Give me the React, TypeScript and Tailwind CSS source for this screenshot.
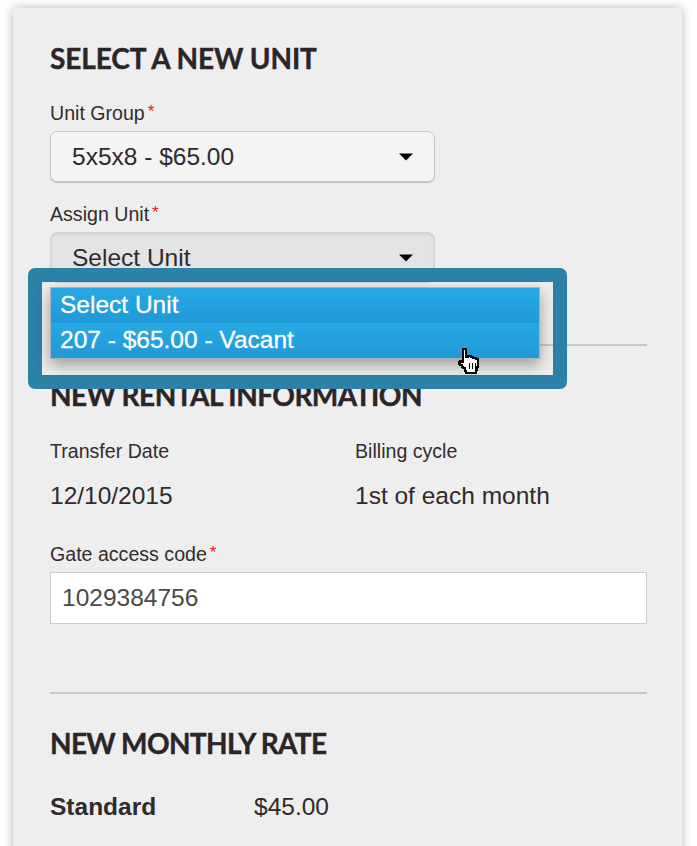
import React from "react";

const Req = () => <span className="ml-[3px] text-[17px] leading-none text-[#f0141e] relative top-[-2px]">*</span>;

const Arrow = () => (
  <svg width="14" height="8" viewBox="0 0 14 8" className="shrink-0">
    <path d="M0 0.5H14L7 7.5Z" fill="#000" />
  </svg>
);

const Heading = ({ children, className = "" }: { children: React.ReactNode; className?: string }) => (
  <h2 className={"font-['Lato',sans-serif] text-[28px] font-bold leading-[30px] text-[#2b2528] [-webkit-text-stroke:0.4px_#2b2528] " + className}>
    {children}
  </h2>
);

const Label = ({ children, req }: { children: React.ReactNode; req?: boolean }) => (
  <div className="flex h-[20px] items-center pt-[2px] text-[19.6px] leading-[20px] text-[#322c2e]">
    {children}
    {req && <Req />}
  </div>
);

const Hand = () => (
  <svg width="24" height="26" viewBox="0 0 24 26" className="absolute left-[458px] top-[348px]" shapeRendering="crispEdges">
    <path
      d="M4 1h3v8h2V8h3v1h2v1h3v1h2v8h-1v3h-1v3H7v-2H6v-3H4v-1H3v-2H1v-1H0v-2h1v-1h2v1h1V1z"
      fill="#fff"
      stroke="#000"
      strokeWidth="1.1"
      transform="translate(1 0)"
    />
    <path d="M11 15h1v6h-1zM14 15h1v6h-1zM17 15h1v6h-1z" fill="#000" />
  </svg>
);

export default function App() {
  return (
    <div className="h-[846px] w-[697px] overflow-hidden bg-white font-['Liberation_Sans',Arial,sans-serif]">
      <div className="relative ml-[13px] mt-[8px] h-[860px] w-[669px] bg-[#eeeeee] pl-[37px] pr-[35px] pt-[35px] shadow-[0_0_10px_rgba(0,0,0,0.28)]">
        <Heading className="tracking-[-0.1px]">SELECT A NEW UNIT</Heading>

        <div className="mt-[29px]">
          <Label req>Unit Group</Label>
          <div className="mt-[9px] flex h-[51px] w-[385px] items-center justify-between rounded-[7px] border border-[#c6c6c6] bg-[#f4f4f4] pl-[21px] pr-[21px] pt-[2px] text-[24.5px] text-[#2f2a2c] shadow-[0_1px_1px_rgba(0,0,0,0.18)]">
            <span>5x5x8 - $65.00</span>
            <span className="-mt-[2px]"><Arrow /></span>
          </div>
        </div>

        <div className="mt-[21px]">
          <Label req>Assign Unit</Label>
          <div className="mt-[9px] flex h-[51px] w-[385px] items-center justify-between rounded-[7px] border border-[#d2d2d2] bg-[#e4e4e4] pl-[21px] pr-[21px] pt-[2px] text-[24.5px] text-[#2f2a2c] shadow-[inset_0_1px_3px_rgba(0,0,0,0.12)]">
            <span>Select Unit</span>
            <span className="-mt-[2px]"><Arrow /></span>
          </div>
        </div>

        <div className="mt-[61px] h-[2px] bg-[#c8c8c8]" />

        <Heading className="mt-[34px] tracking-[-0.53px]">NEW RENTAL INFORMATION</Heading>

        <div className="mt-[30px] grid grid-cols-[305px_1fr]">
          <div>
            <Label>Transfer Date</Label>
            <div className="mt-[21px] text-[24.5px] leading-[30px] text-[#2f2a2c]">12/10/2015</div>
          </div>
          <div>
            <Label>Billing cycle</Label>
            <div className="mt-[21px] text-[24.5px] leading-[30px] text-[#2f2a2c]">1st of each month</div>
          </div>
        </div>

        <div className="mt-[32px]">
          <Label req>Gate access code</Label>
          <div className="mt-[9px] flex h-[52px] items-center border border-[#cccccc] bg-white pl-[11px] text-[24.5px] text-[#4a4a4a]">
            1029384756
          </div>
        </div>

        <div className="mt-[68px] h-[2px] bg-[#c8c8c8]" />

        <Heading className="mt-[34px] tracking-[-0.65px]">NEW MONTHLY RATE</Heading>

        <div className="mt-[34px] flex items-center text-[24.5px] leading-[30px] text-[#2f2a2c]">
          <span className="w-[204px] font-bold">Standard</span>
          <span>$45.00</span>
        </div>
      </div>

      {/* Callout frame and open menu lying over the form */}
      <div className="absolute left-[28px] top-[268px] h-[121px] w-[539px] rounded-[7px] border-[14px] border-[#2b82a6]" />
      <div className="absolute left-[50px] top-[287px] w-[490px] border border-[#a9b4ba] text-[24.5px] font-medium text-white shadow-[0_6px_14px_rgba(0,0,0,0.35)] [-webkit-text-stroke:0.3px_#fff]">
        <div className="flex h-[35px] items-center bg-gradient-to-b from-[#27a9e4] to-[#2099d7] pl-[9px]">Select Unit</div>
        <div className="flex h-[35px] items-center bg-gradient-to-b from-[#27a9e4] to-[#2099d7] pl-[9px]">207 - $65.00 - Vacant</div>
      </div>
      <Hand />
    </div>
  );
}
